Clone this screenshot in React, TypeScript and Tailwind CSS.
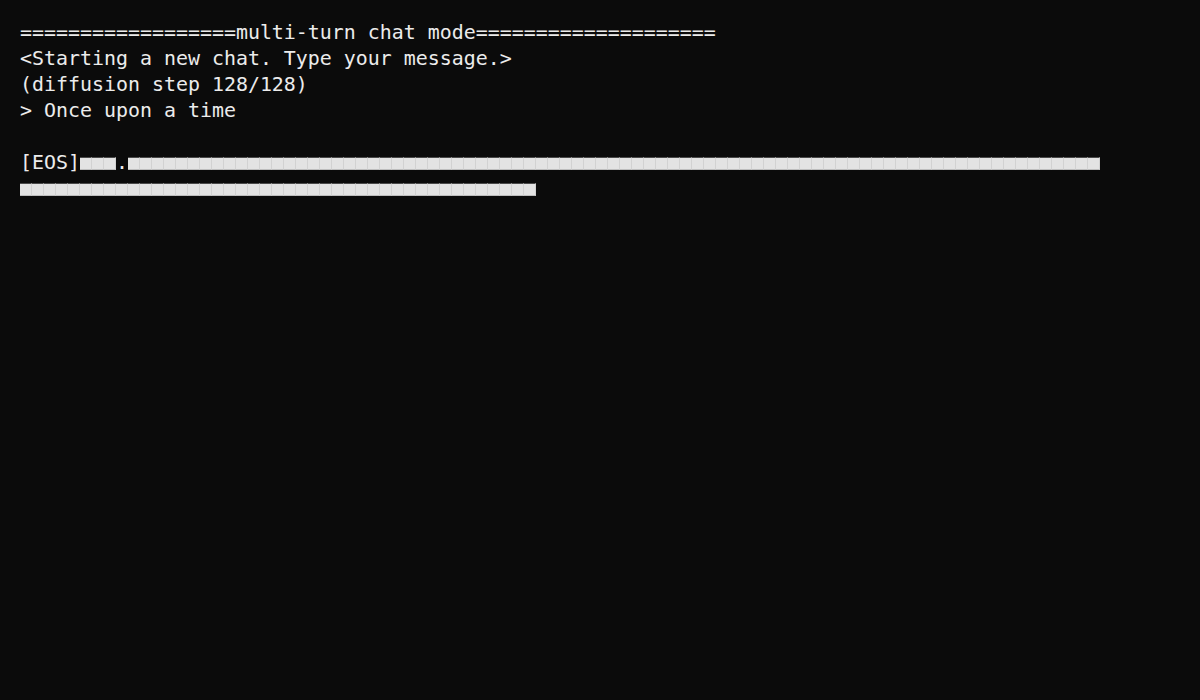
import React from "react";

function Cells({ n }: { n: number }) {
  return (
    <>
      {Array.from({ length: n }).map((_, i) => (
        <span
          key={i}
          className="inline-block w-[12px] h-[13px] bg-[#e3e3e3] border-r border-r-[#d2d2d2] border-t border-t-[#4a4a4a] border-b border-b-[#bdbdbd] box-border"
        />
      ))}
    </>
  );
}

export default function App() {
  return (
    <div
      className="w-[1200px] h-[700px] bg-[#0b0b0b] text-[#ececec] pl-[20px] pt-[20px] text-[19.93px] leading-[26px] whitespace-pre"
      style={{ fontFamily: '"DejaVu Sans Mono", monospace' }}
    >
      <div>==================multi-turn chat mode====================</div>
      <div>{"<Starting a new chat. Type your message.>"}</div>
      <div>(diffusion step 128/128)</div>
      <div>{"> Once upon a time"}</div>
      <div>{" "}</div>
      <div className="flex items-center h-[26px]">
        <span className="w-[60px]">[EOS]</span>
        <Cells n={3} />
        <span className="w-[12px]">.</span>
        <Cells n={81} />
      </div>
      <div className="flex items-center h-[26px]">
        <Cells n={43} />
      </div>
    </div>
  );
}
